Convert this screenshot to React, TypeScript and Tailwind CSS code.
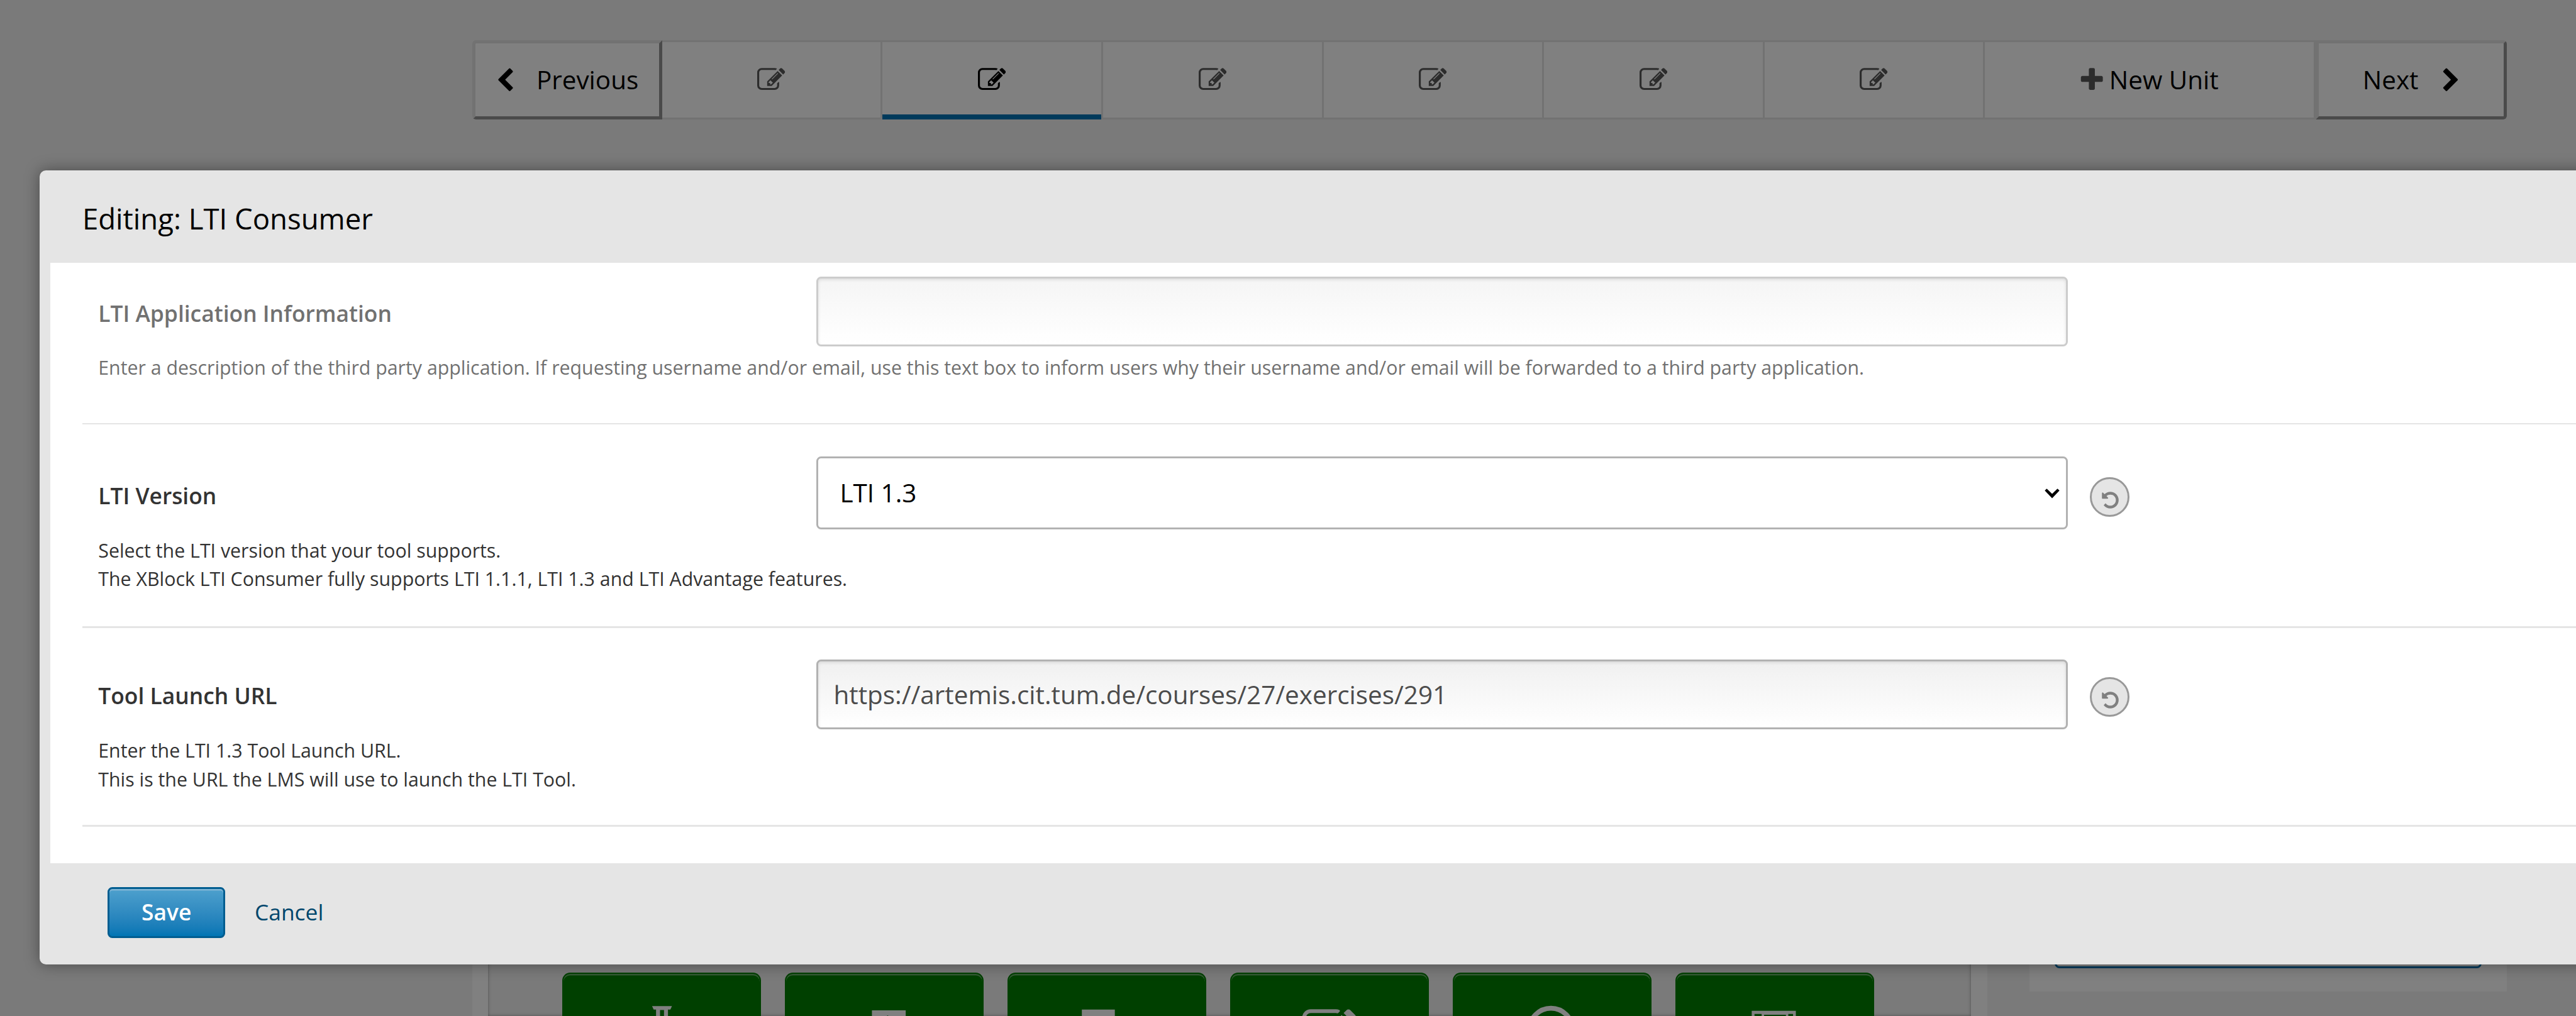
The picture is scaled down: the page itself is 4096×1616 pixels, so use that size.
import React from "react";

const PATHS = {
  edit: "M888 1184l116-116-152-152-116 116v56h96v96h56zm440-720q-16-16-33 1l-350 350q-17 17-1 33t33-1l350-350q17-17 1-33zm80 594v190q0 119-84.5 203.5t-203.5 84.5h-832q-119 0-203.5-84.5t-84.5-203.5v-832q0-119 84.5-203.5t203.5-84.5h832q63 0 117 25 15 7 18 23 3 17-9 29l-49 49q-14 14-32 8-23-6-45-6h-832q-66 0-113 47t-47 113v832q0 66 47 113t113 47h832q66 0 113-47t47-113v-126q0-13 9-22l64-64q15-15 35-7t20 29zm-96-738l288 288-672 672h-288v-288zm444 132l-92 92-288-288 92-92q28-28 68-28t68 28l152 152q28 28 28 68t-28 68z",
  left: "M1427 301l-531 531 531 531q19 19 19 45t-19 45l-166 166q-19 19-45 19t-45-19l-742-742q-19-19-19-45t19-45l742-742q19-19 45-19t45 19l166 166q19 19 19 45t-19 45z",
  right: "M1363 877l-742 742q-19 19-45 19t-45-19l-166-166q-19-19-19-45t19-45l531-531-531-531q-19-19-19-45t19-45l166-166q19-19 45-19t45 19l742 742q19 19 19 45t-19 45z",
  plus: "M1600 736v192q0 40-28 68t-68 28h-416v416q0 40-28 68t-68 28h-192q-40 0-68-28t-28-68v-416h-416q-40 0-68-28t-28-68v-192q0-40 28-68t68-28h416v-416q0-40 28-68t68-28h192q40 0 68 28t28 68v416h416q40 0 68 28t28 68z",
  undo: "M1664 896q0 156-61 298t-164 245-245 164-298 61q-172 0-327-72.5t-264-204.5q-7-10-6.5-22.5t8.5-20.5l137-138q10-9 25-9 16 2 23 12 73 95 179 147t225 52q104 0 198.5-40.5t163.5-109.5 109.5-163.5 40.5-198.5-40.5-198.5-109.5-163.5-163.5-109.5-198.5-40.5q-98 0-188 35.5t-160 101.5l137 138q31 30 14 69-17 40-59 40h-448q-26 0-45-19t-19-45v-448q0-42 40-59 39-17 69 14l130 129q107-101 244.5-156.5t284.5-55.5q156 0 298 61t245 164 164 245 61 298z",
};

function Icon({ name, className }: { name: keyof typeof PATHS; className: string }) {
  return (
    <svg viewBox="0 0 1792 1792" fill="currentColor" className={`shrink-0 ${className}`}>
      <path d={PATHS[name]} />
    </svg>
  );
}

function UnitNav() {
  return (
    <nav className="ml-[750.5px] flex h-[126px] w-[3235.5px] text-[40.43px] leading-[56px] text-black">
      <div className="flex w-[302.4px] items-center rounded-l-[6px] border-[5px] border-t-[#727272] border-r-[#4a4a4a] border-b-[#4a4a4a] border-l-[#727272] bg-[#808080] pl-[27px]">
        <Icon name="left" className="mt-[3px] size-[40.4px]" />
        <span className="ml-[30px]">Previous</span>
      </div>
      {[0, 1, 2, 3, 4, 5].map((i) => (
        <div
          key={i}
          className="relative flex w-[350.6px] items-center justify-center border-y-[3px] border-r-[3px] border-[#727272] bg-[#808080]"
        >
          <Icon name="edit" className={i === 1 ? "size-[44.4px] text-black" : "size-[44.4px] text-[#2c2c2c]"} />
          {i === 1 && <div className="absolute inset-x-0 -bottom-[3px] h-[8px] bg-[#003a5b]" />}
        </div>
      ))}
      <div className="flex w-[525.8px] items-center border-y-[3px] border-r-[3px] border-[#727272] bg-[#808080] pl-[147.5px]">
        <Icon name="plus" className="size-[44.4px] text-[#2c2c2c]" />
        <span className="ml-[5.5px]">New Unit</span>
      </div>
      <div className="flex flex-1 items-center rounded-r-[6px] border-[5px] border-t-[#727272] border-r-[#4a4a4a] border-b-[#4a4a4a] border-l-[#727272] bg-[#808080] pl-[69.5px]">
        <span className="w-[120px]">Next</span>
        <Icon name="right" className="mt-[3px] size-[40.4px]" />
      </div>
    </nav>
  );
}

const COMPONENT_ICONS = [
  <path key="flask" d="M226 84h50l-4 9h-6v20h-10V94h-10v19h-10V93h-6z" />,
  <path key="box" d="M219 95h85v20h-85zM256 109.500q2.500-3 5 0z" fillRule="evenodd" />,
  <path key="page" d="M187 93h83v20h-83z" />,
  <path key="edit" transform="translate(181 82.3) scale(0.0759)" d={PATHS.edit} />,
  <circle key="circle" cx="247" cy="144" r="54.5" fill="none" stroke="currentColor" strokeWidth="12" />,
  <path key="film" d="M192 96h111v20h-7v-12h-12v12h-6v-10h-55v10h-6v-12h-18v12h-7z" fillRule="evenodd" />,
];

function PageBody() {
  return (
    <div className="ml-[750.5px] flex h-[1330px]">
      <div className="w-[2409px] bg-[#808080] px-[25.7px]">
        <div className="h-full bg-[#7a7a7a] pt-[1261px] shadow-[inset_0_0_5px_rgba(0,0,0,0.35)]">
          <div className="ml-[118px] flex gap-[38.6px]">
            {COMPONENT_ICONS.map((icon, i) => (
              <div
                key={i}
                className="h-[200px] w-[315.4px] shrink-0 rounded-[12.6px] border-[2.5px] border-[#004000] bg-[#004000] shadow-[inset_0_2.5px_0_#335a33]"
              >
                <svg viewBox="0 0 499 109" className="-m-[2px] h-[69px] w-[315.4px] text-[#808080]" fill="currentColor">
                  {icon}
                </svg>
              </div>
            ))}
          </div>
        </div>
      </div>
      <aside className="ml-[67.5px] h-[1291px] w-[759px] bg-[#808080] px-[40px] pt-[1120px]">
        <div className="h-[133.5px] rounded-[7.6px] border-[3px] border-[#003a5b]" />
      </aside>
    </div>
  );
}

function ResetButton({ className }: { className: string }) {
  return (
    <div
      className={`ml-[35.5px] flex size-[63px] items-center justify-center rounded-full border-[3px] border-[#999] bg-[#e5e5e5] text-[#808080] ${className}`}
    >
      <Icon name="undo" className="mt-[11px] ml-[2px] size-[31px]" />
    </div>
  );
}

function Label({ children, className }: { children: React.ReactNode; className: string }) {
  return (
    <div className={`w-[1141.7px] shrink-0 text-[35.38px] leading-[48px] font-semibold ${className}`}>{children}</div>
  );
}

const FIELD =
  "w-[1990px] shrink-0 rounded-[7.6px] border-[3px] bg-linear-to-b shadow-[inset_0_2px_5px_rgba(0,0,0,0.1)]";

function Modal() {
  return (
    <div className="absolute top-[271px] left-[62.8px] flex h-[1263.4px] w-[4200px] flex-col rounded-[10px] bg-[#e5e5e5] shadow-[0_0_25px_rgba(0,0,0,0.4)]">
      <h2 className="h-[147px] pt-[46px] pl-[68.2px] text-[45.5px] leading-[60px] text-black">Editing: LTI Consumer</h2>
      <div className="ml-[17.4px] h-[954.7px] bg-white pl-[50.4px] text-[30.32px] leading-[45.5px] text-[#333]">
        <section className="h-[257px] border-b-2 border-[#e5e5e5] pt-[22.3px] pl-[25.7px] text-[#717171]">
          <div className="flex">
            <Label className="mt-[33.5px]">LTI Application Information</Label>
            <div className={`h-[110.5px] border-[#ccc] from-[#f5f5f5] to-white ${FIELD}`} />
          </div>
          <p className="mt-[11.7px]">
            Enter a description of the third party application. If requesting username and/or email, use this text box
            to inform users why their username and/or email will be forwarded to a third party application.
          </p>
        </section>
        <section className="h-[324px] border-b-3 border-[#e5e5e5] pt-[51px] pl-[25.7px]">
          <div className="flex">
            <Label className="mt-[37.6px]">LTI Version</Label>
            <div className="flex h-[116px] w-[1990px] shrink-0 items-center justify-between rounded-[7.6px] border-[3px] border-[#b2b2b2] bg-white pr-[10px] pl-[34.5px] text-[40.43px] leading-[56px] text-black">
              <span>LTI 1.3</span>
              <svg viewBox="0 0 38 25" className="mt-[2px] h-[15.8px] w-[24px]">
                <path d="M0.500 5L5.500 0.500L19 13.500L32.500 0.500L37.500 5L19 24.500Z" />
              </svg>
            </div>
            <ResetButton className="mt-[32.7px]" />
          </div>
          <p className="mt-[10.8px]">
            Select the LTI version that your tool supports.
            <br />
            The XBlock LTI Consumer fully supports LTI 1.1.1, LTI 1.3 and LTI Advantage features.
          </p>
        </section>
        <section className="h-[316px] border-b-3 border-[#e5e5e5] pt-[50.4px] pl-[25.7px]">
          <div className="flex">
            <Label className="mt-[32.6px]">Tool Launch URL</Label>
            <div
              className={`flex h-[111px] items-center border-[#b2b2b2] from-[#f0f0f0] to-white pl-[24.5px] text-[40.43px] leading-[56px] text-[#4c4c4c] ${FIELD}`}
            >
              https://artemis.cit.tum.de/courses/27/exercises/291
            </div>
            <ResetButton className="mt-[27.6px]" />
          </div>
          <p className="mt-[10.8px]">
            Enter the LTI 1.3 Tool Launch URL.
            <br />
            This is the URL the LMS will use to launch the LTI Tool.
          </p>
        </section>
      </div>
      <div className="flex items-center pt-[38px] pl-[108.5px] text-[35.38px] leading-[48px]">
        <div className="flex h-[81px] w-[186.7px] items-center justify-center rounded-[7.6px] border-[3px] border-[#005d90] bg-linear-to-b from-[#4da0cd] to-[#0075b4] pb-[2px] font-semibold text-white shadow-[inset_0_2.5px_0_#80b6d6]">
          Save
        </div>
        <span className="ml-[47px] pb-[2px] text-[#00466c]">Cancel</span>
      </div>
    </div>
  );
}

export default function App() {
  return (
    <div className="relative h-[1616px] w-[4096px] overflow-hidden bg-[#7a7a7a] pt-[64px] font-['Open_Sans',sans-serif]">
      <UnitNav />
      <div className="mt-[96px]">
        <PageBody />
      </div>
      <Modal />
    </div>
  );
}
